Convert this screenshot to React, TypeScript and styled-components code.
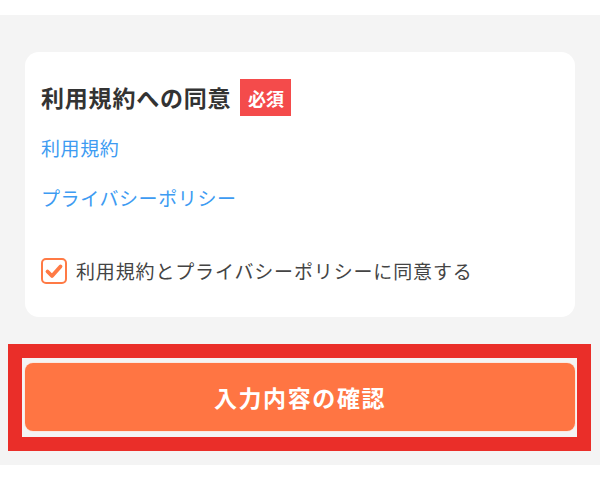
import styled, { createGlobalStyle } from "styled-components";

const GlobalStyle = createGlobalStyle`
  html, body {
    margin: 0;
    padding: 0;
    background: #ffffff;
  }
  body {
    font-family: "Noto Sans CJK JP", "Noto Sans", sans-serif;
    color: #333;
  }
`;

const Page = styled.div`
  padding-top: 15px;
  height: 480px;
  box-sizing: border-box;
`;

const Section = styled.section`
  background: #f4f4f4;
  padding: 37px 0 14px;
`;

const Card = styled.div`
  margin: 0 25px;
  background: #fff;
  border-radius: 14px;
  padding: 27px 16px 33px;
`;

const Header = styled.div`
  display: flex;
  align-items: center;
  gap: 9px;
  height: 37px;
`;

const Title = styled.h2`
  margin: 0;
  font-size: 23px;
  font-weight: 700;
  letter-spacing: 0.8px;
  color: #333;
  line-height: 1;
`;

const Badge = styled.span`
  display: inline-flex;
  align-items: center;
  justify-content: center;
  width: 51px;
  height: 37px;
  background: #f44b4b;
  color: #fff;
  font-size: 18px;
  font-weight: 700;
`;

const TextLink = styled.a<{ $gap: number }>`
  display: block;
  margin-top: ${(p) => p.$gap}px;
  font-size: 19px;
  line-height: 26px;
  letter-spacing: 0.6px;
  color: #3d9bf2;
  text-decoration: none;
`;

const AgreeRow = styled.label`
  display: flex;
  align-items: center;
  gap: 9px;
  margin-top: 47px;
`;

const Box = styled.span`
  display: inline-flex;
  align-items: center;
  justify-content: center;
  width: 26px;
  height: 26px;
  box-sizing: border-box;
  border: 2px solid #ff7a45;
  border-radius: 5px;
  background: #fff;
`;

const AgreeText = styled.span`
  font-size: 19px;
  line-height: 26px;
  letter-spacing: 0.85px;
  color: #444;
`;

const Highlight = styled.div`
  margin: 27px 9px 0 8px;
  border: 14px solid #ea2e29;
  padding: 5px 2px 6px 3px;
`;

const SubmitButton = styled.button`
  display: block;
  width: 100%;
  height: 68px;
  border: none;
  border-radius: 8px;
  background: #ff7543;
  color: #fff;
  font-family: "Noto Sans CJK JP", "Noto Sans", sans-serif;
  font-size: 23px;
  font-weight: 700;
  letter-spacing: 1.6px;
  box-shadow: 0 0 0 1px #fbe9e2;
  cursor: pointer;
`;

export default function App() {
  return (
    <>
      <GlobalStyle />
      <Page>
        <Section>
          <Card>
            <Header>
              <Title>利用規約への同意</Title>
              <Badge>必須</Badge>
            </Header>
            <TextLink href="#" $gap={19}>
              利用規約
            </TextLink>
            <TextLink href="#" $gap={24}>
              プライバシーポリシー
            </TextLink>
            <AgreeRow>
              <Box>
                <svg width="20" height="20" viewBox="0 0 20 20">
                  <path
                    d="M3.5 10.5 L8 15 L16.5 5.5"
                    fill="none"
                    stroke="#ff7a45"
                    strokeWidth="3.8"
                    strokeLinecap="round"
                    strokeLinejoin="round"
                  />
                </svg>
              </Box>
              <AgreeText>利用規約とプライバシーポリシーに同意する</AgreeText>
            </AgreeRow>
          </Card>
          <Highlight>
            <SubmitButton type="button">入力内容の確認</SubmitButton>
          </Highlight>
        </Section>
      </Page>
    </>
  );
}
